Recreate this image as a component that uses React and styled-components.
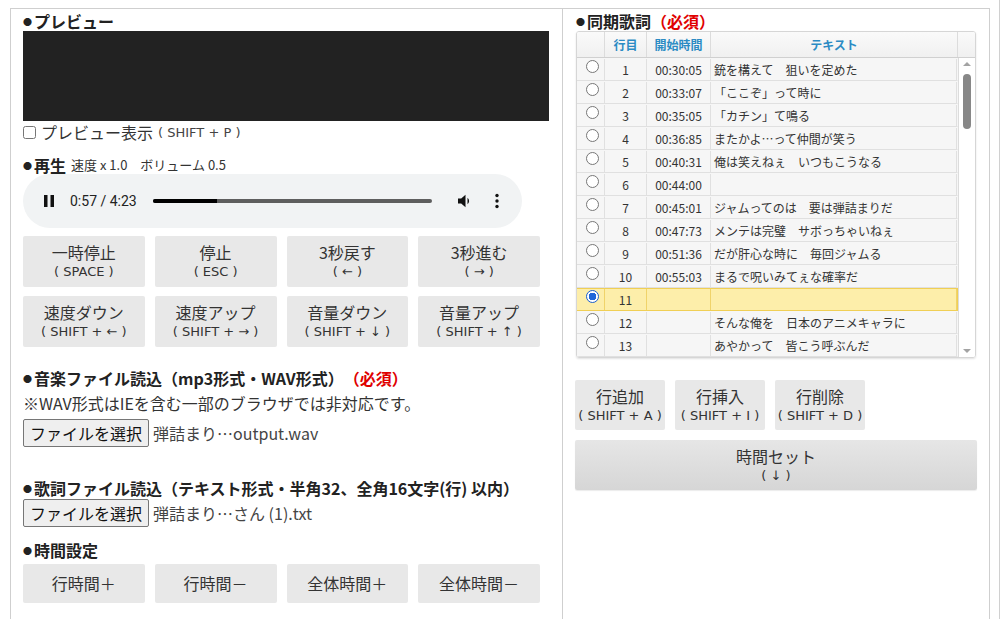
import React from "react";
import styled, { createGlobalStyle } from "styled-components";

const GlobalStyle = createGlobalStyle`
  body {
    margin: 0;
    background: #fff;
    color: #333;
    font-family: "Noto Sans CJK JP", "Noto Sans", sans-serif;
  }
`;

const lyrics = [
  { no: 1, time: "00:30:05", text: "銃を構えて　狙いを定めた" },
  { no: 2, time: "00:33:07", text: "「ここぞ」って時に" },
  { no: 3, time: "00:35:05", text: "「カチン」て鳴る" },
  { no: 4, time: "00:36:85", text: "またかよ…って仲間が笑う" },
  { no: 5, time: "00:40:31", text: "俺は笑えねぇ　いつもこうなる" },
  { no: 6, time: "00:44:00", text: "" },
  { no: 7, time: "00:45:01", text: "ジャムってのは　要は弾詰まりだ" },
  { no: 8, time: "00:47:73", text: "メンテは完璧　サボっちゃいねぇ" },
  { no: 9, time: "00:51:36", text: "だが肝心な時に　毎回ジャムる" },
  { no: 10, time: "00:55:03", text: "まるで呪いみてぇな確率だ" },
  { no: 11, time: "", text: "", active: true },
  { no: 12, time: "", text: "そんな俺を　日本のアニメキャラに" },
  { no: 13, time: "", text: "あやかって　皆こう呼ぶんだ" },
];

const playKeys = [
  ["一時停止", "( SPACE )"],
  ["停止", "( ESC )"],
  ["3秒戻す", "( ← )"],
  ["3秒進む", "( → )"],
  ["速度ダウン", "( SHIFT + ← )"],
  ["速度アップ", "( SHIFT + → )"],
  ["音量ダウン", "( SHIFT + ↓ )"],
  ["音量アップ", "( SHIFT + ↑ )"],
];

const timeKeys = ["行時間＋", "行時間－", "全体時間＋", "全体時間－"];

const rowKeys = [
  ["行追加", "( SHIFT + A )"],
  ["行挿入", "( SHIFT + I )"],
  ["行削除", "( SHIFT + D )"],
];

function PauseIcon() {
  return (
    <svg width="12" height="14" viewBox="0 0 12 14">
      <rect x="1" y="1" width="3.5" height="12" fill="#111" />
      <rect x="7.5" y="1" width="3.5" height="12" fill="#111" />
    </svg>
  );
}

function VolumeIcon() {
  return (
    <svg width="18" height="18" viewBox="0 0 18 18">
      <path d="M2 6.5h3.2L9.5 2.8v12.4L5.2 11.5H2z" fill="#111" />
      <path d="M11.5 5.8a4 4 0 0 1 0 6.4z" fill="#111" />
    </svg>
  );
}

function MenuIcon() {
  return (
    <svg width="6" height="18" viewBox="0 0 6 18">
      <circle cx="3" cy="3.5" r="1.7" fill="#111" />
      <circle cx="3" cy="9" r="1.7" fill="#111" />
      <circle cx="3" cy="14.5" r="1.7" fill="#111" />
    </svg>
  );
}

function App() {
  return (
    <Page>
      <GlobalStyle />
      <Frame>
        <LeftCol>
          <Heading>
            <Bullet>●</Bullet>プレビュー
          </Heading>
          <Preview />
          <CheckRow>
            <Check type="checkbox" readOnly />
            <span>プレビュー表示</span>
            <Hint>( SHIFT + P )</Hint>
          </CheckRow>

          <Heading $mt={12} $h={19}>
            <Bullet>●</Bullet>再生
            <PlayInfo>速度 x 1.0　ボリューム 0.5</PlayInfo>
          </Heading>
          <Player>
            <PauseIcon />
            <TimeText>0:57 / 4:23</TimeText>
            <Progress>
              <ProgressFill style={{ width: "23%" }} />
            </Progress>
            <VolumeIcon />
            <MenuIcon />
          </Player>

          <KeyGrid $mt={8}>
            {playKeys.map(([label, key]) => (
              <KeyButton key={label} $h={51}>
                <KeyLabel>{label}</KeyLabel>
                <KeySub>{key}</KeySub>
              </KeyButton>
            ))}
          </KeyGrid>

          <Heading $mt={20} $h={22}>
            <Bullet>●</Bullet>音楽ファイル読込（mp3形式・WAV形式）<Required>（必須）</Required>
          </Heading>
          <Note>※WAV形式はIEを含む一部のブラウザでは非対応です。</Note>
          <FileRow $mt={2}>
            <FileButton>ファイルを選択</FileButton>
            <FileName>弾詰まり…output.wav</FileName>
          </FileRow>

          <Heading $mt={30} $h={22}>
            <Bullet>●</Bullet>歌詞ファイル読込（テキスト形式・半角32、全角16文字(行) 以内）
          </Heading>
          <FileRow>
            <FileButton>ファイルを選択</FileButton>
            <FileName>弾詰まり…さん (1).txt</FileName>
          </FileRow>

          <Heading $mt={12} $h={22}>
            <Bullet>●</Bullet>時間設定
          </Heading>
          <KeyGrid $mt={3}>
            {timeKeys.map((label) => (
              <KeyButton key={label} $h={39}>
                <KeyLabel>{label}</KeyLabel>
              </KeyButton>
            ))}
          </KeyGrid>
        </LeftCol>

        <RightCol>
          <Heading>
            <Bullet>●</Bullet>同期歌詞<Required>（必須）</Required>
          </Heading>
          <Table>
            <HeadRow>
              <HeadCell />
              <HeadCell>行目</HeadCell>
              <HeadCell>開始時間</HeadCell>
              <HeadCell>テキスト</HeadCell>
              <HeadCell $last />
            </HeadRow>
            <BodyWrap>
              <Rows>
                {lyrics.map((r) => (
                  <Row key={r.no} $active={r.active}>
                    <RadioCell $active={r.active}>
                      <Radio $checked={r.active} />
                    </RadioCell>
                    <Cell $active={r.active} $center>
                      {r.no}
                    </Cell>
                    <Cell $active={r.active} $center>
                      {r.time}
                    </Cell>
                    <Cell $active={r.active}>{r.text}</Cell>
                  </Row>
                ))}
              </Rows>
              <ScrollBar>
                <Arrow />
                <Thumb />
                <Arrow $down />
              </ScrollBar>
            </BodyWrap>
          </Table>

          <RowButtons>
            {rowKeys.map(([label, key]) => (
              <SmallButton key={label}>
                <KeyLabel>{label}</KeyLabel>
                <KeySub>{key}</KeySub>
              </SmallButton>
            ))}
          </RowButtons>
          <SetButton>
            <KeyLabel>時間セット</KeyLabel>
            <KeySub>( ↓ )</KeySub>
          </SetButton>
        </RightCol>
      </Frame>
    </Page>
  );
}

export default App;

const Page = styled.div`
  width: 1000px;
  height: 619px;
  box-sizing: border-box;
  padding: 8px 0 0 10px;
  border-right: 1px solid #d0d0d0;
  overflow: hidden;
`;

const Frame = styled.div`
  width: 980px;
  height: 640px;
  box-sizing: border-box;
  border: 1px solid #cfcfcf;
  border-bottom: none;
  display: grid;
  grid-template-columns: 552px 1fr;
`;

const LeftCol = styled.div`
  box-sizing: border-box;
  border-right: 1px solid #cfcfcf;
  padding: 2px 13px 0 12px;
  display: flex;
  flex-direction: column;
`;

const RightCol = styled.div`
  box-sizing: border-box;
  padding: 2px 11px 0 13px;
  display: flex;
  flex-direction: column;
`;

const Heading = styled.div`
  display: flex;
  align-items: center;
  height: ${(p) => p.$h || 20}px;
  margin-top: ${(p) => p.$mt || 0}px;
  font-size: 16px;
  font-weight: bold;
  color: #222;
  white-space: nowrap;
`;

const Bullet = styled.span`
  font-size: 9px;
  margin-right: 2px;
  margin-top: 1px;
`;

const Required = styled.span`
  color: #e00000;
`;

const Preview = styled.div`
  height: 90px;
  background: #222;
`;

const CheckRow = styled.label`
  display: flex;
  align-items: center;
  height: 22px;
  font-size: 16px;
  color: #333;
`;

const Check = styled.input`
  width: 13px;
  height: 13px;
  margin: 0 5px 0 0;
`;

const Hint = styled.span`
  font-family: "DejaVu Sans", "Noto Sans CJK JP", sans-serif;
  font-size: 13px;
  margin-left: 5px;
  color: #444;
  white-space: pre;
`;

const PlayInfo = styled.span`
  font-size: 13px;
  font-weight: normal;
  margin-left: 5px;
  color: #333;
`;

const Player = styled.div`
  width: 499px;
  height: 54px;
  border-radius: 27px;
  background: #f1f3f4;
  display: flex;
  align-items: center;
  box-sizing: border-box;
  padding: 0 22px 0 20px;
  & > svg:first-child {
    margin-right: 15px;
  }
  & > svg:last-child {
    margin-left: 20px;
  }
`;

const TimeText = styled.span`
  font-family: Roboto, "Liberation Sans", sans-serif;
  font-size: 14px;
  color: #222;
  margin-right: 16px;
`;

const Progress = styled.div`
  flex: 1;
  height: 4px;
  border-radius: 2px;
  background: #5e5e5e;
  margin-right: 24px;
  overflow: hidden;
`;

const ProgressFill = styled.div`
  height: 100%;
  background: #000;
`;

const KeyGrid = styled.div`
  width: 517px;
  margin-top: ${(p) => p.$mt}px;
  display: grid;
  grid-template-columns: repeat(4, 1fr);
  column-gap: 10px;
  row-gap: 9px;
`;

const KeyButton = styled.div`
  height: ${(p) => p.$h}px;
  background: #e8e8e8;
  border-radius: 2px;
  display: flex;
  flex-direction: column;
  align-items: center;
  justify-content: center;
`;

const KeyLabel = styled.div`
  font-size: 16px;
  line-height: 19px;
  color: #333;
`;

const KeySub = styled.div`
  font-family: "DejaVu Sans", "Noto Sans CJK JP", sans-serif;
  font-size: 13px;
  line-height: 16px;
  margin-top: 2px;
  color: #333;
  white-space: pre;
`;

const Note = styled.div`
  height: 28px;
  display: flex;
  align-items: center;
  font-size: 16px;
  color: #333;
`;

const FileRow = styled.div`
  display: flex;
  align-items: center;
  gap: 4px;
  margin-top: ${(p) => p.$mt || 0}px;
`;

const FileButton = styled.div`
  height: 28px;
  box-sizing: border-box;
  padding: 0 6px;
  border: 1px solid #767676;
  border-radius: 2px;
  background: #efefef;
  font-size: 16px;
  line-height: 26px;
  color: #111;
`;

const FileName = styled.span`
  font-size: 16px;
  color: #444;
`;

const Table = styled.div`
  width: 400px;
  border: 1px solid #d6d6d6;
  border-radius: 3px;
  box-shadow: 0 1px 2px rgba(0, 0, 0, 0.12);
  box-sizing: border-box;
  overflow: hidden;
  font-size: 12px;
`;

const HeadRow = styled.div`
  display: grid;
  grid-template-columns: 28px 42px 64px 247px 1fr;
  height: 25px;
  background: linear-gradient(#fafafa, #f0f0f0);
  border-bottom: 1px solid #d0d0d0;
`;

const HeadCell = styled.div`
  border-right: ${(p) => (p.$last ? "none" : "1px solid #dcdcdc")};
  color: #2b8bc4;
  font-weight: bold;
  font-size: 12px;
  display: flex;
  align-items: center;
  justify-content: center;
`;

const BodyWrap = styled.div`
  display: flex;
  height: 299px;
`;

const Rows = styled.div`
  width: 381px;
  border-right: 1px solid #dcdcdc;
`;

const Row = styled.div`
  display: grid;
  grid-template-columns: 28px 42px 64px 1fr;
  height: 23px;
  box-sizing: border-box;
  background: ${(p) => (p.$active ? "#fdeeaa" : "#f6f6f6")};
  border-top: 1px solid ${(p) => (p.$active ? "#f0cf55" : "transparent")};
  border-right: 1px solid ${(p) => (p.$active ? "#f0cf55" : "transparent")};
  border-bottom: 1px solid ${(p) => (p.$active ? "#f0cf55" : "#e0e0e0")};
`;

const Cell = styled.div`
  border-right: 1px solid ${(p) => (p.$active ? "#f0d36a" : "#e0e0e0")};
  display: flex;
  align-items: center;
  justify-content: ${(p) => (p.$center ? "center" : "flex-start")};
  padding-left: ${(p) => (p.$center ? 0 : 3)}px;
  color: #333;
  white-space: nowrap;
  overflow: hidden;
`;

const RadioCell = styled(Cell)`
  align-items: flex-start;
  justify-content: center;
  padding-top: 1px;
`;

const Radio = styled.span`
  width: 11px;
  height: 11px;
  border-radius: 50%;
  border: 1px solid ${(p) => (p.$checked ? "#1a5fd0" : "#777")};
  background: ${(p) =>
    p.$checked ? "radial-gradient(circle, #1f66d8 0 3.6px, #fff 4px)" : "#fff"};
`;

const ScrollBar = styled.div`
  flex: 1;
  display: flex;
  flex-direction: column;
  align-items: center;
  background: #fff;
  padding: 4px 0;
  box-sizing: border-box;
`;

const Arrow = styled.div`
  width: 0;
  height: 0;
  border-left: 4px solid transparent;
  border-right: 4px solid transparent;
  ${(p) =>
    p.$down
      ? "border-top: 4px solid #a3a3a3; margin-top: auto;"
      : "border-bottom: 4px solid #a3a3a3;"}
`;

const Thumb = styled.div`
  width: 8px;
  height: 55px;
  border-radius: 4px;
  background: #878787;
  margin-top: 8px;
`;

const RowButtons = styled.div`
  display: flex;
  gap: 10px;
  margin-top: 22px;
  margin-left: -1px;
`;

const SmallButton = styled.div`
  width: 90px;
  height: 50px;
  background: #e8e8e8;
  border-radius: 2px;
  display: flex;
  flex-direction: column;
  align-items: center;
  justify-content: center;
`;

const SetButton = styled.div`
  width: 402px;
  height: 50px;
  margin: 10px 0 0 -1px;
  border-radius: 2px;
  background: linear-gradient(#e6e6e6, #d6d6d6);
  box-shadow: 0 1px 1px rgba(0, 0, 0, 0.08);
  display: flex;
  flex-direction: column;
  align-items: center;
  justify-content: center;
`;
